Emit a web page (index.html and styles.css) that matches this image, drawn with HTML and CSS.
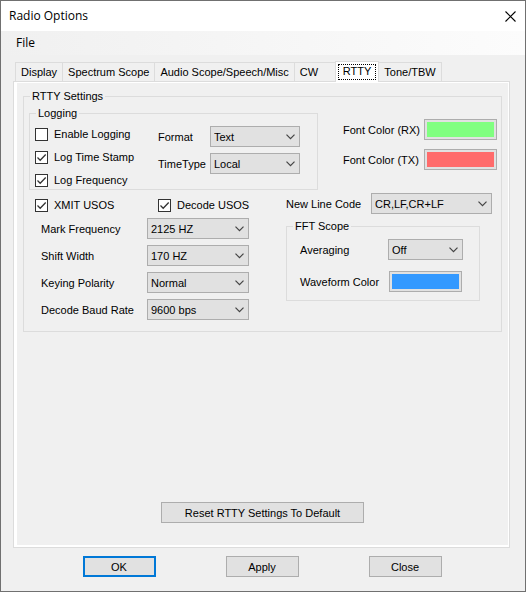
FILE: index.html
```html
<!DOCTYPE html>
<html lang="en">
<head>
    <meta charset="UTF-8">
    <meta name="viewport" content="width=device-width, initial-scale=1.0">
    <title>Radio Options</title>
    <link rel="stylesheet" href="styles.css">
</head>
<body>
    <div class="window">
        <header class="title-bar">
            <h1>Radio Options</h1>
            <button type="button" class="close-btn" aria-label="Close window">
                <svg width="11" height="11" viewBox="0 0 11 11">
                    <path d="M0.5 0.5L10.5 10.5M10.5 0.5L0.5 10.5" fill="none" stroke="#000" stroke-width="1.1"/>
                </svg>
            </button>
        </header>
        <nav class="menu-bar">
            <button type="button">File</button>
        </nav>

        <div class="tabs" role="tablist">
            <button type="button" role="tab">Display</button>
            <button type="button" role="tab">Spectrum Scope</button>
            <button type="button" role="tab">Audio Scope/Speech/Misc</button>
            <button type="button" role="tab">CW</button>
            <button type="button" role="tab" class="active" aria-selected="true"><span>RTTY</span></button>
            <button type="button" role="tab">Tone/TBW</button>
        </div>

        <main class="pane" role="tabpanel">
            <fieldset class="rtty">
                <legend>RTTY Settings</legend>
                <div class="row">
                    <fieldset class="logging">
                        <legend>Logging</legend>
                        <div class="log-body">
                            <div class="checks">
                                <label><input type="checkbox"> Enable Logging</label>
                                <label><input type="checkbox" checked> Log Time Stamp</label>
                                <label><input type="checkbox" checked> Log Frequency</label>
                            </div>
                            <div class="fields log-fields">
                                <label for="format">Format</label>
                                <select id="format"><option>Text</option></select>
                                <label for="time-type">TimeType</label>
                                <select id="time-type"><option>Local</option></select>
                            </div>
                        </div>
                    </fieldset>
                    <div class="fields font-colors">
                        <label for="rx-color">Font Color (RX)</label>
                        <button type="button" id="rx-color" class="swatch green"></button>
                        <label for="tx-color">Font Color (TX)</label>
                        <button type="button" id="tx-color" class="swatch red"></button>
                    </div>
                </div>
                <div class="row">
                    <div class="left">
                        <div class="usos">
                            <label><input type="checkbox" checked> XMIT USOS</label>
                            <label><input type="checkbox" checked> Decode USOS</label>
                        </div>
                        <div class="fields signal">
                            <label for="mark">Mark Frequency</label>
                            <select id="mark"><option>2125 HZ</option></select>
                            <label for="shift">Shift Width</label>
                            <select id="shift"><option>170 HZ</option></select>
                            <label for="polarity">Keying Polarity</label>
                            <select id="polarity"><option>Normal</option></select>
                            <label for="baud">Decode Baud Rate</label>
                            <select id="baud"><option>9600 bps</option></select>
                        </div>
                    </div>
                    <div class="right">
                        <div class="fields line-code">
                            <label for="line-code">New Line Code</label>
                            <select id="line-code"><option>CR,LF,CR+LF</option></select>
                        </div>
                        <fieldset class="fft">
                            <legend>FFT Scope</legend>
                            <div class="fields fft-fields">
                                <label for="averaging">Averaging</label>
                                <select id="averaging"><option>Off</option></select>
                                <label for="wave-color">Waveform Color</label>
                                <button type="button" id="wave-color" class="swatch blue"></button>
                            </div>
                        </fieldset>
                    </div>
                </div>
            </fieldset>
            <button type="button" class="btn reset">Reset RTTY Settings To Default</button>
        </main>

        <footer class="actions">
            <button type="button" class="btn default">OK</button>
            <button type="button" class="btn">Apply</button>
            <button type="button" class="btn">Close</button>
        </footer>
    </div>
</body>
</html>
```
FILE: styles.css
```css
* {
    box-sizing: border-box;
}
body {
    margin: 0;
    font-family: "Liberation Sans", Arial, sans-serif;
    font-size: 11px;
    line-height: 14px;
    color: #000;
}
button, select, input {
    font: inherit;
    color: inherit;
    margin: 0;
}
.window {
    display: flex;
    flex-direction: column;
    min-height: 100vh;
    background: #f0f0f0;
    border: 1px solid #707070;
}

/* title and menu */
.title-bar {
    display: flex;
    justify-content: space-between;
    align-items: center;
    height: 30px;
    padding: 0 9px 0 8px;
    background: #fff;
}
.title-bar h1 {
    margin: 0;
    font-family: "Open Sans", "Noto Sans", sans-serif;
    font-size: 12px;
    font-weight: normal;
}
.close-btn {
    display: flex;
    padding: 0;
    border: 0;
    background: none;
}
.menu-bar {
    display: flex;
    align-items: center;
    height: 24px;
    padding: 0 15px;
    background: linear-gradient(to right, #f0f0f0, #fcfcfc);
}
.menu-bar button {
    padding: 0;
    border: 0;
    background: none;
    font-family: "Open Sans", "Noto Sans", sans-serif;
    font-size: 12px;
}

/* tabs */
.tabs {
    display: flex;
    align-items: flex-end;
    margin: 6px 14px 0;
}
.tabs button {
    height: 19px;
    padding: 0 5px;
    border: 1px solid #dcdcdc;
    border-width: 1px 1px 0 0;
    background: #f0f0f0;
    white-space: nowrap;
}
.tabs button:first-child {
    border-left-width: 1px;
}
.tabs button:nth-child(4) {
    width: 41px;
    text-align: left;
}
.tabs button.active {
    height: 21px;
    margin: 0 0 -1px -1px;
    padding: 2px;
    border-left-width: 1px;
    background: #fff;
    z-index: 1;
}
.tabs .active span {
    display: block;
    height: 16px;
    line-height: 12px;
    padding: 0 4px;
    border: 1px dotted #000;
}
.pane {
    flex: 1;
    display: flex;
    flex-direction: column;
    justify-content: space-between;
    margin: 0 15px 0 12px;
    padding: 7px 7px 24px 9px;
    border: 1px solid #dcdcdc;
    box-shadow: inset 3px 0 #fff, inset -1px 0 #fff, inset 0 1px #fff, inset 0 -2px #fff;
}

/* groups */
fieldset {
    margin: 0;
    padding: 0;
    border: 1px solid #dcdcdc;
    min-width: 0;
}
legend {
    padding: 0 2px;
    margin-left: 6px;
}
.rtty {
    padding: 3px 0 11px;
}
.row {
    display: flex;
    justify-content: space-between;
    padding: 0 4px 0 5px;
}
.fields {
    display: grid;
    align-items: center;
    white-space: nowrap;
}
.logging {
    width: 289px;
}
.log-body {
    display: flex;
    padding: 0 0 2px 5px;
}
.checks {
    display: flex;
    flex-direction: column;
    gap: 9px;
    width: 123px;
    padding-top: 7px;
}
.checks label, .usos label {
    display: flex;
    align-items: center;
    gap: 6px;
    height: 14px;
}
.log-fields {
    grid-template-columns: 52px 90px;
    row-gap: 6px;
    align-content: start;
    padding-top: 6px;
}
.font-colors {
    grid-template-columns: 81px 73px;
    row-gap: 9px;
    align-content: start;
    padding-top: 13px;
}
.left {
    padding: 8px 0 0 6px;
}
.usos {
    display: grid;
    grid-template-columns: 123px auto;
}
.signal {
    grid-template-columns: 106px 102px;
    row-gap: 6px;
    padding: 6px 0 0 6px;
}
.right {
    padding: 3px 5px 0 0;
}
.line-code {
    grid-template-columns: 85px 121px;
}
.fft {
    width: 194px;
    margin-top: 5px;
}
.fft-fields {
    grid-template-columns: 88px 75px;
    row-gap: 11px;
    padding: 6px 0 8px 13px;
}

/* controls */
input[type="checkbox"] {
    appearance: none;
    width: 13px;
    height: 13px;
    border: 1px solid #333;
    background: #fff;
}
input[type="checkbox"]:checked {
    background: #fff url("data:image/svg+xml,%3Csvg xmlns='http://www.w3.org/2000/svg' viewBox='0 0 11 11'%3E%3Cpath d='M1.5 5.5L4.2 8.2L9.7 2.5' fill='none' stroke='%23333' stroke-width='1.3'/%3E%3C/svg%3E");
}
select {
    appearance: none;
    height: 21px;
    padding: 0 20px 0 3px;
    border: 1px solid #adadad;
    border-radius: 0;
    background: #e1e1e1 url("data:image/svg+xml,%3Csvg xmlns='http://www.w3.org/2000/svg' width='9' height='6' viewBox='0 0 9 6'%3E%3Cpath d='M0.5 0.7L4.5 4.7L8.5 0.7' fill='none' stroke='%23444' stroke-width='1.2'/%3E%3C/svg%3E") no-repeat right 4px center;
}
.swatch {
    width: 73px;
    height: 21px;
    padding: 2px;
    border: 1px solid #adadad;
    background-clip: content-box;
    box-shadow: inset 0 0 0 2px #e1e1e1;
    justify-self: center;
}
.green {
    background-color: #80ff80;
}
.red {
    background-color: #ff6b6b;
}
.blue {
    background-color: #3399ff;
}
.btn {
    width: 73px;
    height: 21px;
    padding: 0;
    border: 1px solid #adadad;
    background: #e1e1e1;
}
.reset {
    width: 203px;
    align-self: center;
}
.default {
    border: 2px solid #0078d7;
}
.actions {
    display: flex;
    justify-content: center;
    gap: 70px;
    padding: 8px 2px 14px 0;
}
```
